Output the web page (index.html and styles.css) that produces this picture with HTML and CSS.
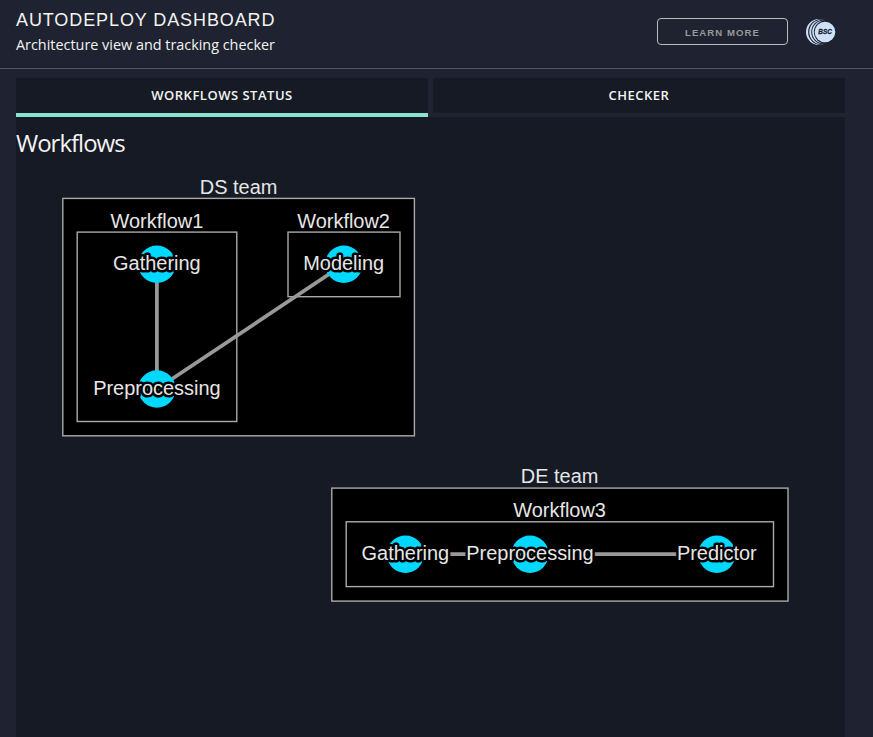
FILE: index.html
```html
<!DOCTYPE html>
<html lang="en">
<head>
<meta charset="utf-8">
<title>Autodeploy Dashboard</title>
<link rel="stylesheet" href="styles.css">
</head>
<body>
<header class="header">
  <div class="brand">
    <h1 class="brand-title">AUTODEPLOY DASHBOARD</h1>
    <p class="brand-subtitle">Architecture view and tracking checker</p>
  </div>
  <div class="actions">
    <button class="learn-more">LEARN MORE</button>
    <svg class="logo" viewBox="0 0 30 28" role="img" aria-label="BSC">
      <circle class="logo-disc" cx="13" cy="14" r="13"/>
      <circle class="logo-gap" cx="15.1" cy="14" r="13"/>
      <circle class="logo-disc" cx="15.5" cy="14" r="12.2"/>
      <circle class="logo-gap" cx="17.4" cy="14" r="12.2"/>
      <circle class="logo-disc" cx="17.4" cy="14" r="11.2"/>
      <circle class="logo-gap" cx="19.4" cy="14" r="11.5"/>
      <circle class="logo-disc" cx="19" cy="14" r="10.3"/>
      <text class="logo-text" x="19.1" y="16.4" textLength="13.5" lengthAdjust="spacingAndGlyphs">BSC</text>
    </svg>
  </div>
</header>
<main class="main">
  <nav class="tabs">
    <div class="tab tab-selected">WORKFLOWS STATUS</div>
    <div class="tab">CHECKER</div>
  </nav>
  <section class="panel">
    <h2 class="panel-title">Workflows</h2>
    <svg class="graph" width="829" height="570" viewBox="16 167 829 570">
      <g class="group">
        <rect x="62.8" y="198.4" width="351.6" height="237.4"/>
        <rect x="77.2" y="232.1" width="159.6" height="189.4"/>
        <rect x="288" y="232.1" width="112" height="64.6"/>
        <rect x="331.8" y="488.1" width="456.2" height="113"/>
        <rect x="346.2" y="521.8" width="427.3" height="64.8"/>
      </g>
      <g class="edge">
        <path d="M156.9 264.3V389M343.8 264.3L156.9 389M405.4 554.2H716.8"/>
      </g>
      <g class="node">
        <circle cx="156.9" cy="264.3" r="18.7"/>
        <circle cx="156.9" cy="389" r="18.7"/>
        <circle cx="343.8" cy="264.3" r="18.7"/>
        <circle cx="405.4" cy="554.2" r="18.7"/>
        <circle cx="530" cy="554.2" r="18.7"/>
        <circle cx="716.8" cy="554.2" r="18.7"/>
      </g>
      <g class="label">
        <text x="238.6" y="194">DS team</text>
        <text x="156.9" y="227.6">Workflow1</text>
        <text x="343.6" y="227.6">Workflow2</text>
        <text x="559.6" y="483.4">DE team</text>
        <text x="559.6" y="517">Workflow3</text>
      </g>
      <g class="label node-label">
        <text x="156.9" y="270.3">Gathering</text>
        <text x="156.9" y="395">Preprocessing</text>
        <text x="343.7" y="270.3">Modeling</text>
        <text x="405.4" y="560.1">Gathering</text>
        <text x="530" y="560.1">Preprocessing</text>
        <text x="716.8" y="560.1">Predictor</text>
      </g>
    </svg>
  </section>
</main>
</body>
</html>
```
FILE: styles.css
```css
* { box-sizing: border-box; }
body {
  margin: 0;
  height: 737px;
  overflow: hidden;
  display: flex;
  flex-direction: column;
  background: #1f2230;
  color: #f3f3f1;
  font-family: "Open Sans", sans-serif;
}
.header {
  height: 69px;
  flex: none;
  display: flex;
  justify-content: space-between;
  padding: 8px 37px 0 16px;
  border-bottom: 1px solid #4c5a66;
}
.brand-title {
  margin: 0;
  font: 400 18px/24px "Liberation Sans", sans-serif;
  letter-spacing: .9px;
}
.brand-subtitle {
  margin: 2px 0 0;
  font-size: 14.4px;
  line-height: 21px;
}
.actions {
  display: flex;
  align-items: flex-start;
  gap: 18px;
  padding-top: 10px;
}
.learn-more {
  width: 131px;
  height: 27px;
  padding: 3px 0 0;
  border: 1px solid #bbb;
  border-radius: 4px;
  background: transparent;
  color: #999;
  font: 700 9.6px/22px "Liberation Sans", sans-serif;
  letter-spacing: 1.05px;
}
.logo { width: 30px; height: 28px; }
.logo-disc { fill: #cde1f9; }
.logo-gap { fill: #1f2230; }
.logo-text {
  fill: #1f2230;
  stroke: #1f2230;
  stroke-width: .3;
  font: italic 700 6.5px "Liberation Sans", sans-serif;
  text-anchor: middle;
}
.main {
  flex: 1;
  display: flex;
  flex-direction: column;
  padding: 9px 28px 0 16px;
}
.tabs { display: flex; gap: 5px; }
.tab {
  flex: 1;
  height: 39px;
  border-bottom: 4px solid #1f2230;
  background: #161a25;
  font-size: 13px;
  font-weight: 600;
  line-height: 34px;
  letter-spacing: .5px;
  text-align: center;
}
.tab-selected { border-bottom-color: #8de0d2; }
.panel { flex: 1; background: #161a25; }
.panel-title {
  margin: 0;
  height: 50px;
  padding-top: 9px;
  font-size: 24px;
  font-weight: 400;
  line-height: 33px;
  letter-spacing: -1px;
}
.graph { display: block; }
.group rect { fill: #000; stroke: #aaa; stroke-width: 1.4; }
.edge path { fill: none; stroke: #999; stroke-width: 3.75; }
.node circle { fill: #00d8ff; }
.label text {
  fill: #e6e6e6;
  font: 19.95px "Liberation Sans", sans-serif;
  text-anchor: middle;
}
.node-label text {
  stroke: #000;
  stroke-width: 5;
  stroke-linejoin: round;
  paint-order: stroke;
}
```
